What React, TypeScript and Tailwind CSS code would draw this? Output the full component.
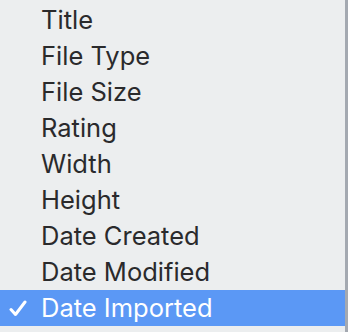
import React from 'react';

const items = ['Title', 'File Type', 'File Size', 'Rating', 'Width', 'Height', 'Date Created', 'Date Modified', 'Date Imported'];
const selected = 'Date Imported';

const App: React.FC = () => {
  return (
    <div className="flex h-[332px] w-[348px] bg-[#eceeef]" style={{ fontFamily: 'Inter, "Noto Sans", sans-serif' }}>
      <div className="flex w-[345px] flex-col pt-[2px]">
        {items.map((label) => {
          const active = label === selected;
          return (
            <div
              key={label}
              className={
                active
                  ? 'relative flex h-[36px] items-center bg-[#5b98f5] pl-[41px] text-[25.5px] leading-none text-white'
                  : 'relative flex h-[36px] items-center pl-[41px] text-[25.5px] leading-none text-[#2a2a2c]'
              }
            >
              {active && (
                <svg className="absolute left-[9px] top-[10px]" width="18" height="17" viewBox="0 0 18 17" fill="none">
                  <path d="M2 9.5 L6.5 14.5 L16 2" stroke="white" strokeWidth="3" strokeLinecap="round" strokeLinejoin="round" />
                </svg>
              )}
              {label}
            </div>
          );
        })}
      </div>
      <div className="w-[3px] bg-[#a4a9b1]" />
    </div>
  );
};

export default App;
